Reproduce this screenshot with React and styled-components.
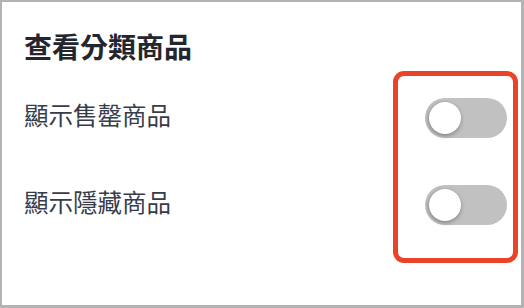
import React, { useState } from 'react';
import styled, { createGlobalStyle } from 'styled-components';

const GlobalStyle = createGlobalStyle`
    html, body {
        margin: 0;
        padding: 0;
        background: #ffffff;
    }
    body {
        font-family: "Noto Sans CJK TC", "Noto Sans", sans-serif;
    }
`;

const Frame = styled.section`
    position: relative;
    box-sizing: border-box;
    width: 524px;
    height: 308px;
    border-style: solid;
    border-color: #b3b3b3;
    border-width: 2px 3px 3px 2px;
    background: #ffffff;
    padding: 24px 14px 0 22px;
    display: flex;
    flex-direction: column;
`;

const Title = styled.h2`
    margin: 0 0 32px 0;
    font-size: 28px;
    line-height: 40px;
    font-weight: 700;
    color: #23262e;
`;

const List = styled.div`
    display: flex;
    flex-direction: column;
    gap: 47px;
`;

const Row = styled.div`
    display: flex;
    align-items: center;
    justify-content: space-between;
    height: 40px;
`;

const Label = styled.span`
    font-size: 24.5px;
    line-height: 34px;
    padding-bottom: 6px;
    font-weight: 400;
    color: #363c4a;
`;

const Track = styled.button`
    position: relative;
    width: 82px;
    height: 40px;
    padding: 0;
    border: none;
    border-radius: 20px;
    background: ${(p) => (p.$on ? '#4cd964' : '#c1c1c1')};
    cursor: pointer;
    flex-shrink: 0;
`;

const Knob = styled.span`
    position: absolute;
    top: 4px;
    left: ${(p) => (p.$on ? '46px' : '4px')};
    width: 32px;
    height: 32px;
    border-radius: 50%;
    background: #ffffff;
    box-shadow: 0 2px 4px rgba(0, 0, 0, 0.28), -1px 0 3px rgba(0, 0, 0, 0.12);
`;

// annotation drawn over the toggles
const Highlight = styled.div`
    position: absolute;
    left: 391px;
    top: 69px;
    width: 125px;
    height: 192px;
    box-sizing: border-box;
    border: 5px solid #e9432a;
    border-radius: 11px;
    pointer-events: none;
`;

function Toggle({ on, onToggle }) {
    return (
        <Track $on={on} onClick={onToggle} aria-pressed={on}>
            <Knob $on={on} />
        </Track>
    );
}

export default function App() {
    const [soldOut, setSoldOut] = useState(false);
    const [hidden, setHidden] = useState(false);

    return (
        <>
            <GlobalStyle />
            <Frame>
                <Title>查看分類商品</Title>
                <List>
                    <Row>
                        <Label>顯示售罄商品</Label>
                        <Toggle on={soldOut} onToggle={() => setSoldOut(!soldOut)} />
                    </Row>
                    <Row>
                        <Label>顯示隱藏商品</Label>
                        <Toggle on={hidden} onToggle={() => setHidden(!hidden)} />
                    </Row>
                </List>
                <Highlight />
            </Frame>
        </>
    );
}
